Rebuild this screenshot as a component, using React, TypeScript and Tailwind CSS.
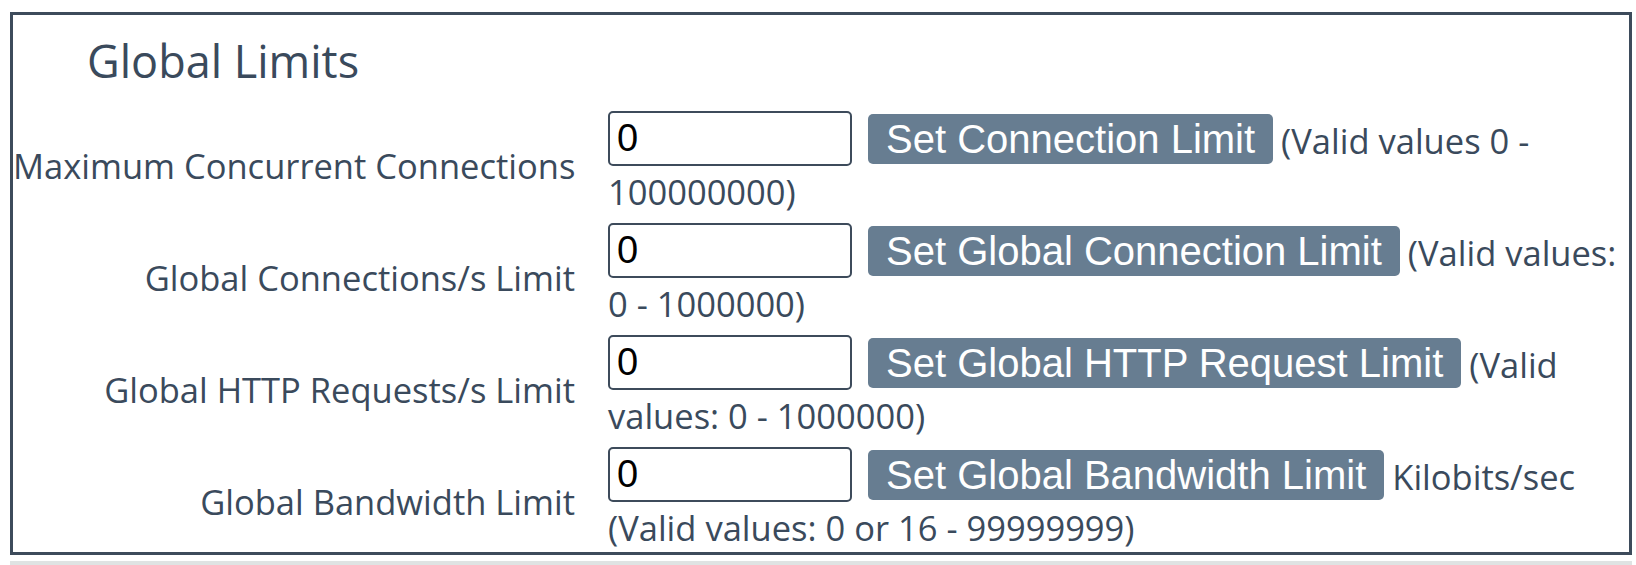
import React from 'react';

const rows = [
  {
    id: 'max-conn',
    label: 'Maximum Concurrent Connections',
    button: 'Set Connection Limit',
    first: '(Valid values 0 -',
    second: '100000000)',
  },
  {
    id: 'conn-rate',
    label: 'Global Connections/s Limit',
    button: 'Set Global Connection Limit',
    first: '(Valid values:',
    second: '0 - 1000000)',
  },
  {
    id: 'http-rate',
    label: 'Global HTTP Requests/s Limit',
    button: 'Set Global HTTP Request Limit',
    first: '(Valid',
    second: 'values: 0 - 1000000)',
  },
  {
    id: 'bandwidth',
    label: 'Global Bandwidth Limit',
    button: 'Set Global Bandwidth Limit',
    first: 'Kilobits/sec',
    second: '(Valid values: 0 or 16 - 99999999)',
  },
];

const App: React.FC = () => {
  return (
    <div className="bg-white w-[1636px] h-[565px] overflow-hidden pt-[12px] pl-[10px] pr-[4px] font-['Open_Sans',sans-serif] text-[#3a4a5c]">
      <div className="border-[3px] border-[#3d4b5b] pt-[19px] pb-[1px]">
        <h2 className="ml-[74px] text-[45px] leading-[53px] font-normal">Global Limits</h2>

        <div className="mt-[24px] flex flex-col gap-[8px]">
          {rows.map((row) => (
            <div key={row.id} className="flex items-center">
              <label
                htmlFor={row.id}
                className="w-[562px] shrink-0 pt-[6px] text-right text-[34.5px] leading-[46px] whitespace-nowrap"
              >
                {row.label}
              </label>
              <div className="ml-[33px] flex flex-col">
                <div className="flex items-center">
                  <input
                    id={row.id}
                    type="text"
                    defaultValue="0"
                    className="w-[244px] h-[55px] border-2 border-[#3d4b5b] rounded-[5px] pl-[7px] text-[38px] text-black font-['Liberation_Sans',Arial,sans-serif] outline-none"
                  />
                  <button className="ml-[16px] h-[50px] px-[18px] rounded-[5px] bg-[#677d91] text-white text-[40px] leading-[46px] font-['Liberation_Sans',Arial,sans-serif] whitespace-nowrap">
                    {row.button}
                  </button>
                  <span className="ml-[8px] pt-[4px] text-[34.5px] leading-[46px] whitespace-nowrap">{row.first}</span>
                </div>
                <span className="pt-[3px] text-[34.5px] leading-[46px] whitespace-nowrap">{row.second}</span>
              </div>
            </div>
          ))}
        </div>
      </div>
      <div className="mt-[6px] h-[12px] bg-[#dfe3e3]" />
    </div>
  );
};

export default App;
